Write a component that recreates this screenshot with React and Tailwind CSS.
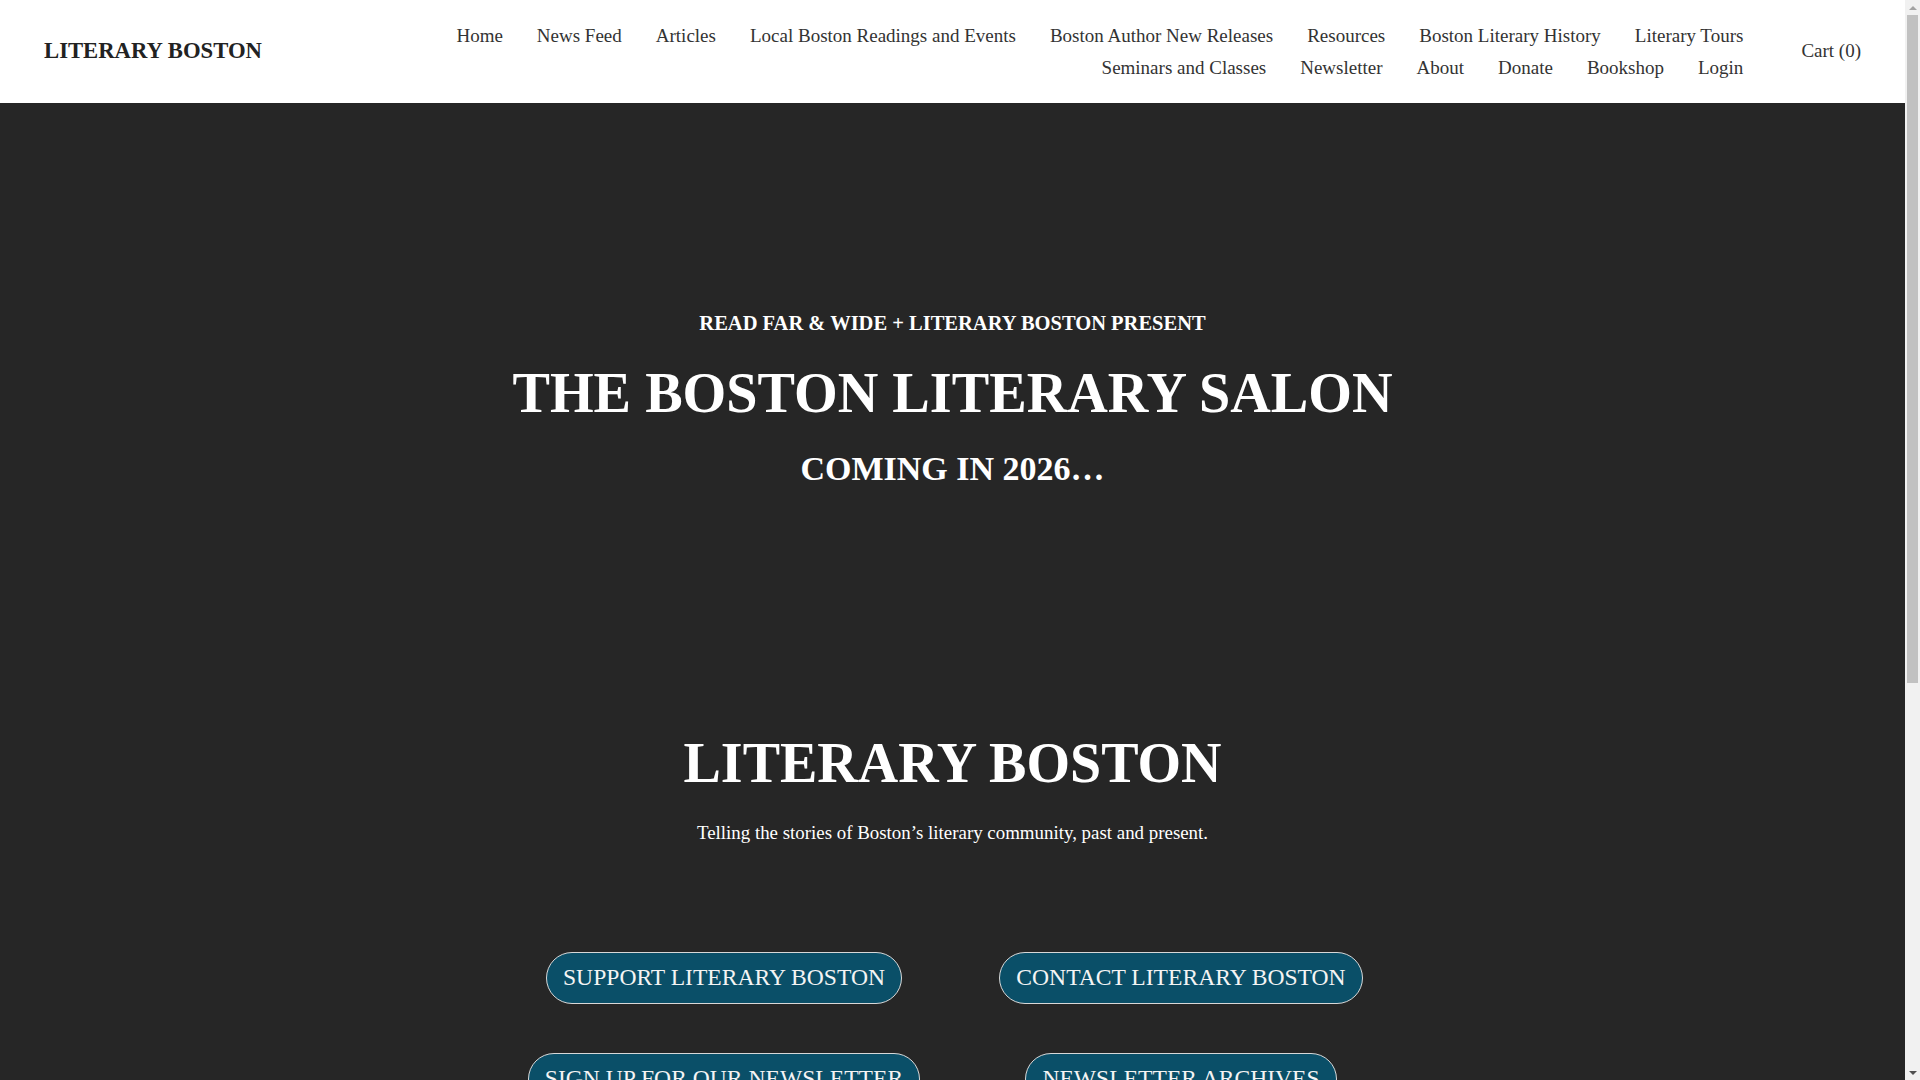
const topRow = ['Home', 'News Feed', 'Articles', 'Local Boston Readings and Events', 'Boston Author New Releases', 'Resources', 'Boston Literary History', 'Literary Tours'];
const bottomRow = ['Seminars and Classes', 'Newsletter', 'About', 'Donate', 'Bookshop', 'Login'];

function NavRow({ items }) {
  return (
    <div className="flex justify-end gap-x-[34px] leading-[32px]">
      {items.map((item) => (
        <a key={item} href="#" className="text-[19px] text-[#333] whitespace-nowrap">
          {item}
        </a>
      ))}
    </div>
  );
}

function PillButton({ children }) {
  return (
    <a
      href="#"
      className="inline-flex items-center h-[52px] px-[16px] rounded-full border border-[#d8d8d8] bg-[#0a4f68] text-[23.6px] text-[#f4f4f4] whitespace-nowrap"
    >
      {children}
    </a>
  );
}

// bare scrollbar strip, like the one in the screenshot
function Scrollbar() {
  return (
    <div className="w-[15px] h-screen shrink-0 bg-[#f1f1f1] flex flex-col items-center">
      <div className="h-[15px] flex items-center justify-center">
        <div className="w-0 h-0 border-x-[4px] border-x-transparent border-b-[4px] border-b-[#a3a3a3]" />
      </div>
      <div className="w-[11px] h-[668px] bg-[#c1c1c1]" />
      <div className="flex-1" />
      <div className="h-[15px] flex items-center justify-center">
        <div className="w-0 h-0 border-x-[4px] border-x-transparent border-t-[4px] border-t-[#505050]" />
      </div>
    </div>
  );
}

export default function App() {
  return (
    <div className="flex h-screen overflow-hidden bg-[#262626] font-['Liberation_Serif','Times_New_Roman',serif]">
      <div className="flex-1 min-w-0">
        {/* HEADER */}
        <header className="h-[103px] bg-white flex items-center justify-between px-[44px]">
          <a href="#" className="text-[22.7px] font-bold text-[#222]">
            LITERARY BOSTON
          </a>
          <div className="flex items-center">
            <nav className="flex flex-col">
              <NavRow items={topRow} />
              <NavRow items={bottomRow} />
            </nav>
            <a href="#" className="ml-[58px] text-[19px] text-[#333]">Cart (0)</a>
          </div>
        </header>

        {/* HERO */}
        <section className="flex flex-col items-center text-white text-center pt-[206px]">
          <p className="text-[20.5px] font-bold leading-[28px]">READ FAR &amp; WIDE + LITERARY BOSTON PRESENT</p>
          <h2 className="mt-[24px] text-[56.2px] font-bold leading-[64px]">THE BOSTON LITERARY SALON</h2>
          <p className="mt-[24px] text-[34px] font-bold leading-[40px]">COMING IN 2026…</p>

          <h1 className="mt-[242px] text-[56px] font-bold leading-[64px]">LITERARY BOSTON</h1>
          <p className="mt-[24px] text-[18.9px] leading-[28px]">
            Telling the stories of Boston’s literary community, past and present.
          </p>

          <div className="mt-[105px] w-[914px] grid grid-cols-2 justify-items-center gap-y-[49px] pb-[120px]">
            <PillButton>SUPPORT LITERARY BOSTON</PillButton>
            <PillButton>CONTACT LITERARY BOSTON</PillButton>
            <PillButton>SIGN UP FOR OUR NEWSLETTER</PillButton>
            <PillButton>NEWSLETTER ARCHIVES</PillButton>
          </div>
        </section>
      </div>
      <Scrollbar />
    </div>
  );
}
